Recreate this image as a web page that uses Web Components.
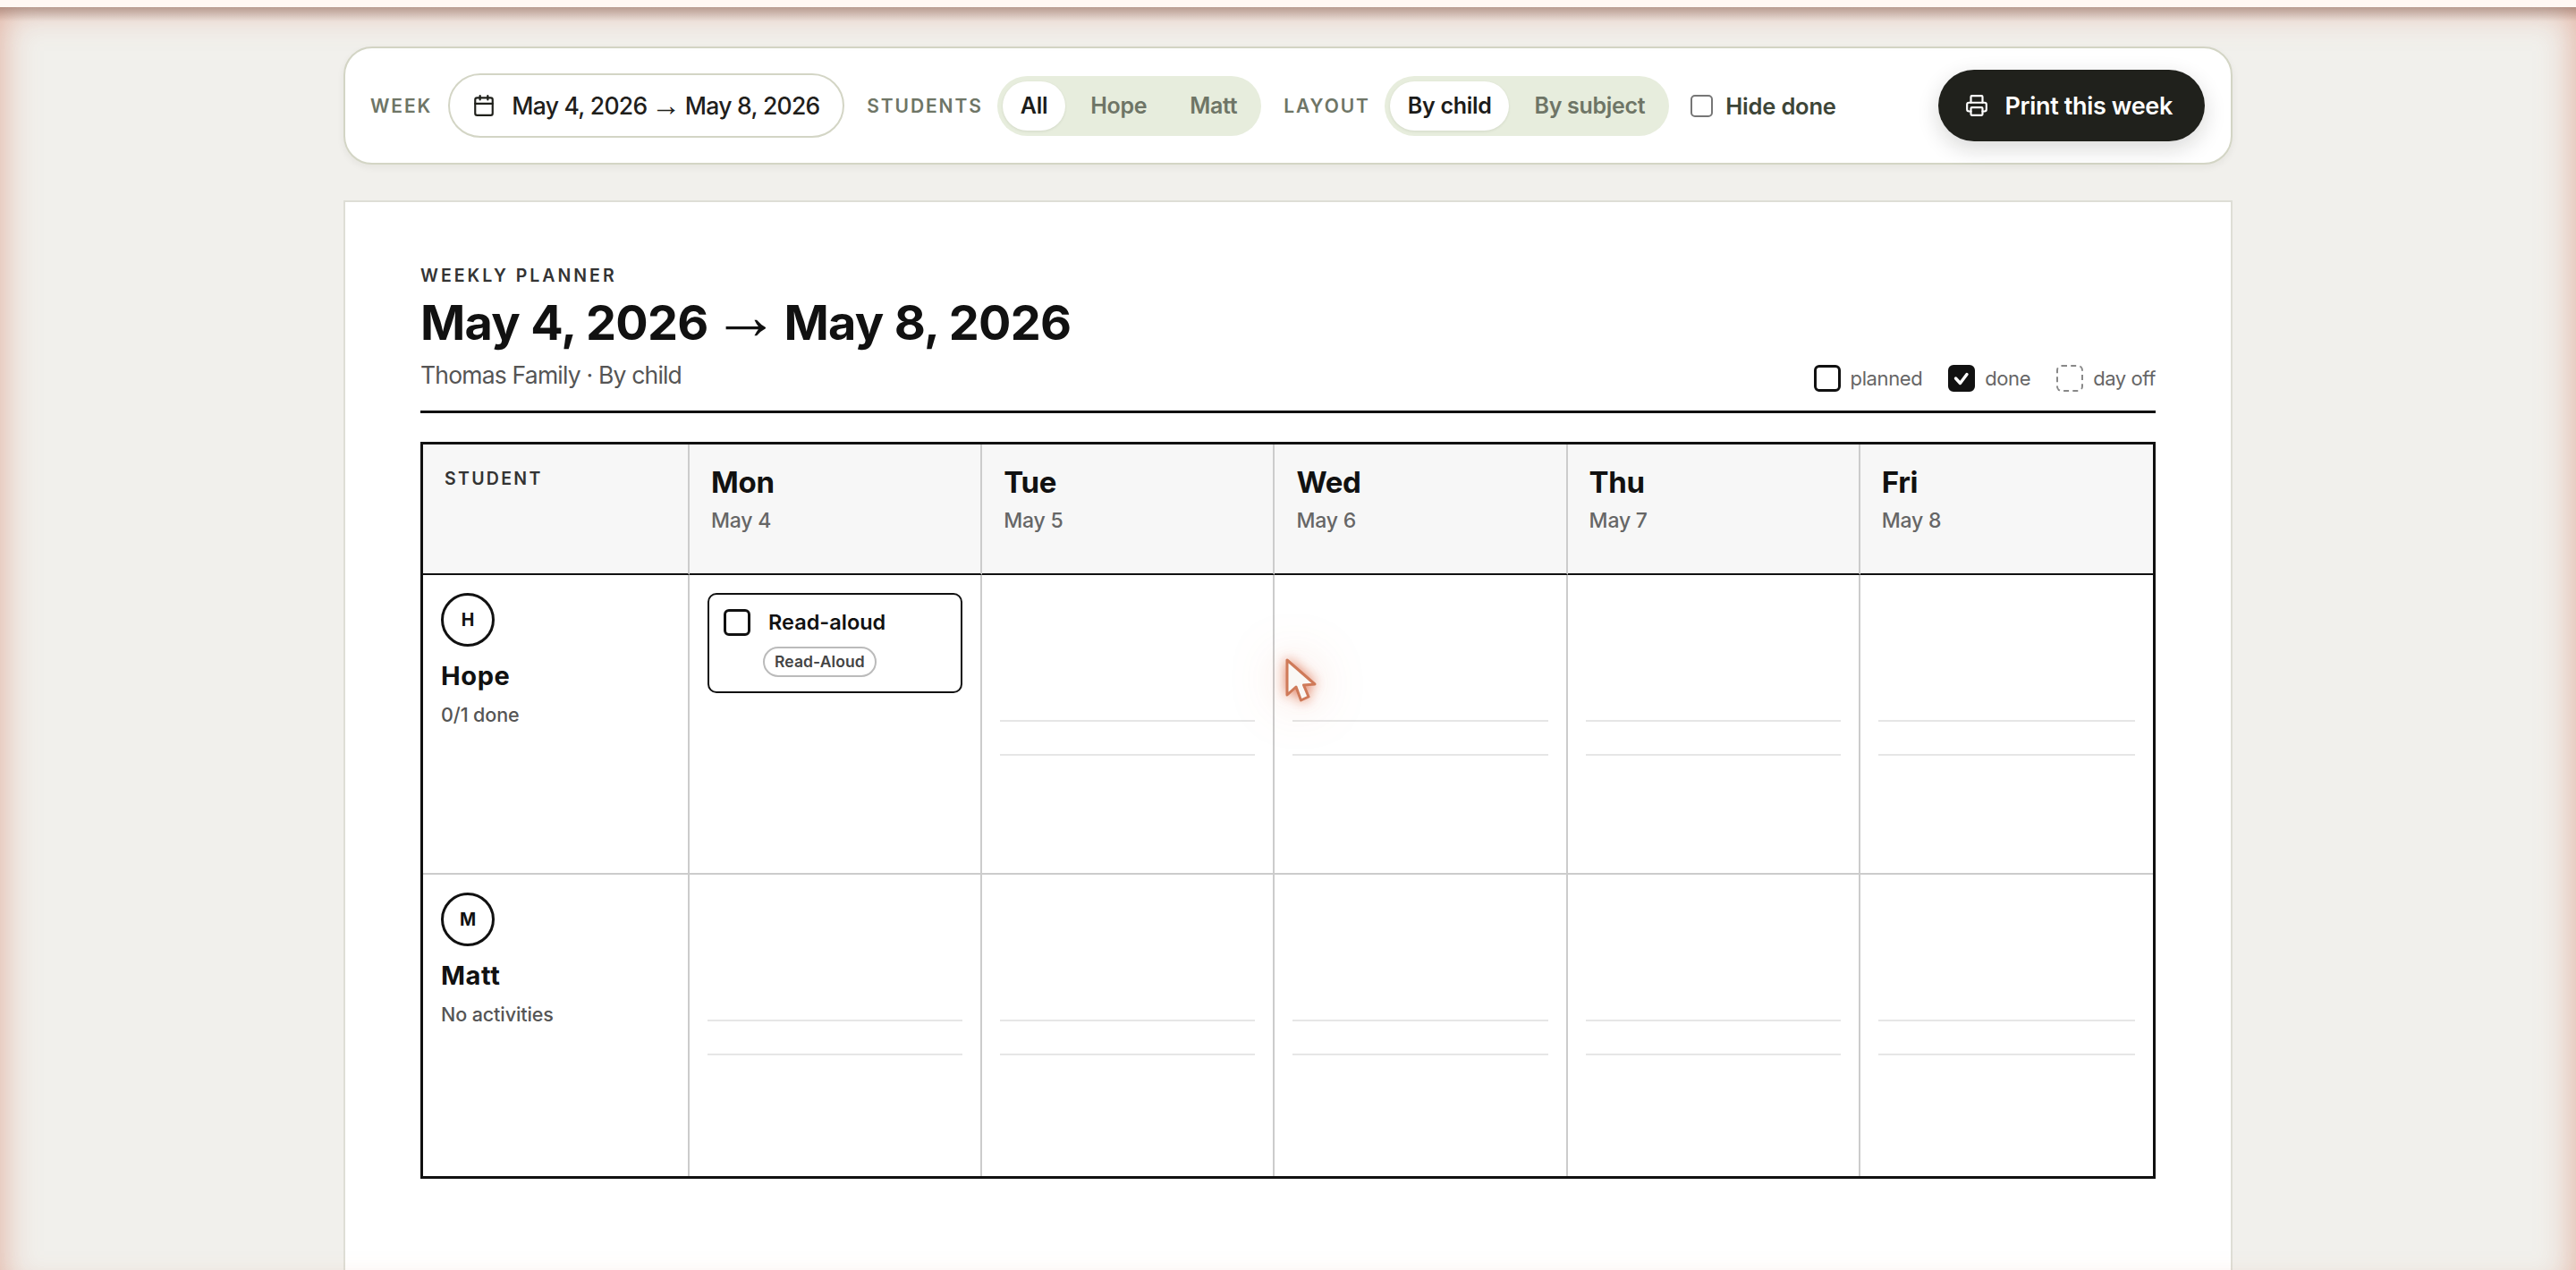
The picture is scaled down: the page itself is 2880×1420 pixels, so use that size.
<!DOCTYPE html>
<html>
<head>
<meta charset="utf-8">
<title>Weekly planner</title>
<style>
	html, body { margin: 0; height: 100%; overflow: hidden; }
	body {
		background: #f1f0ec;
		color: #111;
		font-family: Inter, "Liberation Sans", sans-serif;
	}
</style>
</head>
<body>
<planner-app>
	<planner-toolbar>
		<tool-label>WEEK</tool-label>
		<week-picker range="May 4, 2026 → May 8, 2026"></week-picker>
		<tool-label gap>STUDENTS</tool-label>
		<seg-control options="All,Hope,Matt" active="All"></seg-control>
		<tool-label gap>LAYOUT</tool-label>
		<seg-control options="By child,By subject" active="By child"></seg-control>
		<hide-toggle>Hide done</hide-toggle>
		<print-button>Print this week</print-button>
	</planner-toolbar>
	<planner-sheet eyebrow="WEEKLY PLANNER" heading="May 4, 2026 → May 8, 2026" sub="Thomas Family · By child">
		<plan-legend slot="legend"></plan-legend>
		<planner-grid>
			<head-cell><span class="student">STUDENT</span></head-cell>
			<head-cell day="Mon" date="May 4"></head-cell>
			<head-cell day="Tue" date="May 5"></head-cell>
			<head-cell day="Wed" date="May 6"></head-cell>
			<head-cell day="Thu" date="May 7"></head-cell>
			<head-cell day="Fri" date="May 8" last></head-cell>

			<student-cell name="Hope" note="0/1 done" ruled></student-cell>
			<day-cell ruled><task-card tag="Read-Aloud">Read-aloud</task-card></day-cell>
			<day-cell ruled empty></day-cell>
			<day-cell ruled empty></day-cell>
			<day-cell ruled empty></day-cell>
			<day-cell ruled empty last></day-cell>

			<student-cell name="Matt" note="No activities"></student-cell>
			<day-cell empty></day-cell>
			<day-cell empty></day-cell>
			<day-cell empty></day-cell>
			<day-cell empty></day-cell>
			<day-cell empty last></day-cell>
		</planner-grid>
	</planner-sheet>
</planner-app>
<cursor-glow></cursor-glow>
<edge-vignette></edge-vignette>

<script>
// the arrow comes from another font, spaces included so it doesn't overlap the dates
const thinArrow = text => text.replace(' → ', '<span class="ar"> → </span>');

class Base extends HTMLElement {
	constructor() {
		super();
		this.attachShadow({ mode: 'open' });
	}
}

class PlannerApp extends Base {
	connectedCallback() {
		this.shadowRoot.innerHTML = `
		<style>
			:host { display: block; border-top: 8px solid #fff8f4; padding-top: 44px; }
			.col { width: 2112px; margin: 0 auto; display: flex; flex-direction: column; gap: 40px; }
		</style>
		<div class="col"><slot></slot></div>`;
	}
}

class PlannerToolbar extends Base {
	connectedCallback() {
		this.shadowRoot.innerHTML = `
		<style>
			:host {
				display: flex;
				align-items: center;
				box-sizing: border-box;
				height: 132px;
				padding: 0 29px 0 28px;
				background: #fff;
				border: 2px solid #d3d5c5;
				border-radius: 32px;
				box-shadow: 0 3px 8px rgba(40,40,20,.06);
			}
		</style>
		<slot></slot>`;
	}
}

class ToolLabel extends Base {
	connectedCallback() {
		this.shadowRoot.innerHTML = `
		<style>
			:host {
				display: block;
				font-size: 21px;
				font-weight: 600;
				letter-spacing: 1.9px;
				color: #6e7566;
				margin-right: 16px;
			}
			:host([gap]) { margin-left: 25px; }
		</style>
		<slot></slot>`;
	}
}

class WeekPicker extends Base {
	connectedCallback() {
		this.shadowRoot.innerHTML = `
		<style>
			:host {
				display: flex;
				align-items: center;
				box-sizing: border-box;
				height: 72px;
				width: 443px;
				margin-left: 2px;
				padding-left: 25px;
				gap: 18px;
				border: 2px solid #d3d5c5;
				border-radius: 36px;
				font-size: 26.5px;
				font-weight: 500;
				letter-spacing: -0.7px;
				color: #1f201b;
				white-space: nowrap;
			}
			svg { width: 26px; height: 26px; flex: none; }
			.ar {
				font-family: "Liberation Sans", sans-serif;
				font-size: 33px;
				line-height: 0;
				font-weight: 400;
				letter-spacing: 0;
				word-spacing: -4.5px;
				vertical-align: -1px;
			}
		</style>
		<svg viewBox="0 0 24 24" fill="none" stroke="#1f201b" stroke-width="2" stroke-linecap="round" stroke-linejoin="round">
			<path d="M8 2v4"/><path d="M16 2v4"/><rect x="3" y="4" width="18" height="18" rx="2"/><path d="M3 10h18"/>
		</svg>
		<span>${thinArrow(this.getAttribute('range'))}</span>`;
	}
}

class SegControl extends Base {
	connectedCallback() {
		const active = this.getAttribute('active');
		const items = this.getAttribute('options').split(',').map(o =>
			`<span class="${o === active ? 'on' : ''}">${o}</span>`).join('');
		this.shadowRoot.innerHTML = `
		<style>
			:host {
				display: flex;
				gap: 8px;
				box-sizing: border-box;
				height: 67px;
				padding: 6px 7px 6px 6px;
				background: #e7eddd;
				border-radius: 34px;
				font-size: 25px;
				font-weight: 600;
				letter-spacing: -0.3px;
				color: #6e7566;
				white-space: nowrap;
			}
			span {
				display: flex;
				align-items: center;
				padding: 0 20px;
				border-radius: 28px;
			}
			.on { background: #fff; color: #1c1c1a; box-shadow: 0 1px 3px rgba(40,50,20,.1); }
		</style>
		${items}`;
	}
}

class HideToggle extends Base {
	connectedCallback() {
		this.shadowRoot.innerHTML = `
		<style>
			:host {
				display: flex;
				align-items: center;
				gap: 14px;
				margin-left: 24px;
				font-size: 25.5px;
				font-weight: 600;
				letter-spacing: -0.2px;
				color: #3d4538;
				white-space: nowrap;
			}
			input {
				appearance: none;
				box-sizing: border-box;
				width: 25px;
				height: 25px;
				margin: 0;
				background: #fff;
				border: 2px solid #767676;
				border-radius: 5px;
			}
		</style>
		<input type="checkbox"><slot></slot>`;
	}
}

class PrintButton extends Base {
	connectedCallback() {
		this.shadowRoot.innerHTML = `
		<style>
			:host {
				display: flex;
				align-items: center;
				gap: 19px;
				box-sizing: border-box;
				height: 80px;
				margin-left: auto;
				padding: 0 36px 0 30px;
				background: #20211c;
				border-radius: 40px;
				box-shadow: 0 8px 24px rgba(20,20,10,.16);
				color: #fff;
				font-size: 27px;
				font-weight: 600;
				letter-spacing: -0.35px;
				white-space: nowrap;
			}
			svg { width: 26px; height: 26px; flex: none; }
		</style>
		<svg viewBox="0 0 24 24" fill="none" stroke="#fff" stroke-width="2" stroke-linecap="round" stroke-linejoin="round">
			<path d="M6 18H4a2 2 0 0 1-2-2v-5a2 2 0 0 1 2-2h16a2 2 0 0 1 2 2v5a2 2 0 0 1-2 2h-2"/>
			<path d="M6 9V3a1 1 0 0 1 1-1h10a1 1 0 0 1 1 1v6"/>
			<rect x="6" y="14" width="12" height="8" rx="1"/>
		</svg>
		<slot></slot>`;
	}
}

class PlannerSheet extends Base {
	connectedCallback() {
		this.shadowRoot.innerHTML = `
		<style>
			:host {
				display: block;
				box-sizing: border-box;
				height: 1196px;
				padding: 70px 84px 0;
				background: #fff;
				border: 2px solid #deded6;
				border-bottom: 0;
			}
			header {
				display: flex;
				justify-content: space-between;
				align-items: flex-end;
				padding-bottom: 21px;
				border-bottom: 3px solid #111;
				margin-bottom: 32px;
			}
			.eyebrow { font-size: 19.5px; line-height: 24px; font-weight: 600; letter-spacing: 3px; color: #333; margin-bottom: 9px; }
			h1 { margin: 0; font-size: 54px; line-height: 64px; font-weight: 700; letter-spacing: -0.7px; color: #111; }
			h1 .ar {
				font-family: "Liberation Sans", sans-serif;
				font-size: 75px;
				line-height: 0;
				letter-spacing: 0;
				word-spacing: -16px;
				vertical-align: 1px;
			}
			.sub { font-size: 26.5px; line-height: 34px; font-weight: 400; letter-spacing: -0.8px; color: #555; margin-top: 9px; margin-bottom: 2px; }
		</style>
		<header>
			<div>
				<div class="eyebrow">${this.getAttribute('eyebrow')}</div>
				<h1>${thinArrow(this.getAttribute('heading'))}</h1>
				<div class="sub">${this.getAttribute('sub')}</div>
			</div>
			<slot name="legend"></slot>
		</header>
		<slot></slot>`;
	}
}

class PlanLegend extends Base {
	connectedCallback() {
		this.shadowRoot.innerHTML = `
		<style>
			:host {
				display: flex;
				align-items: center;
				gap: 29px;
				font-size: 22px;
				color: #666;
				letter-spacing: -0.4px;
			}
			div { display: flex; align-items: center; gap: 11px; }
			i {
				display: block;
				box-sizing: border-box;
				width: 30px;
				height: 30px;
				border: 3px solid #111;
				border-radius: 6px;
			}
			i.done { background: #111; }
			i.off { border: 2px dashed #888; }
			svg { display: block; width: 24px; height: 24px; }
		</style>
		<div><i></i>planned</div>
		<div><i class="done"><svg viewBox="0 0 24 24" fill="none" stroke="#fff" stroke-width="3.4" stroke-linecap="round" stroke-linejoin="round"><path d="M5.5 12l5 5.5 7.5-10"/></svg></i>done</div>
		<div><i class="off"></i>day off</div>`;
	}
}

class PlannerGrid extends Base {
	connectedCallback() {
		this.shadowRoot.innerHTML = `
		<style>
			:host { display: block; border: 3px solid #111; }
			.grid {
				display: grid;
				grid-template-columns: 298px repeat(5, 1fr);
				grid-template-rows: 146px 335px 337px;
			}
		</style>
		<div class="grid"><slot></slot></div>`;
	}
}

class HeadCell extends Base {
	connectedCallback() {
		const day = this.getAttribute('day');
		this.shadowRoot.innerHTML = `
		<style>
			:host {
				display: block;
				box-sizing: border-box;
				padding: 22px 24px 0;
				background: #f7f7f7;
				border-right: 2px solid #ccc;
				border-bottom: 2px solid #111;
			}
			:host([last]) { border-right: 0; }
			.day { font-size: 33px; line-height: 40px; font-weight: 700; letter-spacing: -0.3px; color: #111; }
			.date { font-size: 23px; line-height: 30px; font-weight: 500; letter-spacing: -0.2px; color: #666; margin-top: 8px; }
			::slotted(.student) {
				display: block;
				font-size: 19.5px;
				line-height: 24px;
				font-weight: 600;
				letter-spacing: 2.3px;
				color: #333;
				margin-top: 4px;
			}
		</style>
		${day ? `<div class="day">${day}</div><div class="date">${this.getAttribute('date')}</div>` : '<slot></slot>'}`;
	}
}

class StudentCell extends Base {
	connectedCallback() {
		const name = this.getAttribute('name');
		this.shadowRoot.innerHTML = `
		<style>
			:host {
				display: block;
				box-sizing: border-box;
				padding: 20px;
				border-right: 2px solid #ccc;
			}
			:host([ruled]) { border-bottom: 2px solid #ccc; }
			.avatar {
				box-sizing: border-box;
				display: flex;
				align-items: center;
				justify-content: center;
				width: 60px;
				height: 60px;
				border: 3px solid #111;
				border-radius: 50%;
				font-size: 19.5px;
				font-weight: 700;
				color: #111;
			}
			.name { font-size: 29px; line-height: 36px; font-weight: 700; letter-spacing: 0.6px; color: #111; margin-top: 15px; }
			.note { font-size: 21.5px; line-height: 28px; font-weight: 500; letter-spacing: -0.1px; color: #555; margin-top: 11px; }
		</style>
		<div class="avatar">${name[0]}</div>
		<div class="name">${name}</div>
		<div class="note">${this.getAttribute('note')}</div>`;
	}
}

class DayCell extends Base {
	connectedCallback() {
		this.shadowRoot.innerHTML = `
		<style>
			:host {
				display: block;
				box-sizing: border-box;
				padding: 20px;
				border-right: 2px solid #ccc;
			}
			:host([ruled]) { border-bottom: 2px solid #ccc; }
			:host([last]) { border-right: 0; }
			.lines { display: grid; gap: 36px; padding-top: 142px; }
			.lines b { display: block; height: 2px; background: #e6e6e6; }
		</style>
		${this.hasAttribute('empty') ? '<div class="lines"><b></b><b></b></div>' : '<slot></slot>'}`;
	}
}

class TaskCard extends Base {
	connectedCallback() {
		this.shadowRoot.innerHTML = `
		<style>
			:host {
				display: block;
				box-sizing: border-box;
				height: 112px;
				padding: 16px 16px 0;
				border: 2.5px solid #111;
				border-radius: 10px;
			}
			.top { display: flex; align-items: center; gap: 20px; }
			i {
				display: block;
				box-sizing: border-box;
				width: 30px;
				height: 30px;
				border: 3px solid #111;
				border-radius: 6px;
			}
			.title { font-size: 23.5px; line-height: 28px; font-weight: 600; color: #111; }
			.tag {
				display: inline-block;
				box-sizing: border-box;
				height: 34px;
				line-height: 30px;
				margin: 12px 0 0 44px;
				padding: 0 11px;
				border: 2px solid #bbb;
				border-radius: 17px;
				font-size: 17.5px;
				font-weight: 600;
				letter-spacing: 0.1px;
				color: #444;
			}
		</style>
		<div class="top"><i></i><span class="title"><slot></slot></span></div>
		<span class="tag">${this.getAttribute('tag')}</span>`;
	}
}

class CursorGlow extends Base {
	connectedCallback() {
		this.shadowRoot.innerHTML = `
		<style>
			:host { position: fixed; left: 1436px; top: 735px; width: 38px; height: 52px; pointer-events: none; }
			svg { display: block; overflow: visible; filter: drop-shadow(0 0 7px rgba(215,90,50,.75)) drop-shadow(0 0 28px rgba(215,90,50,.28)); }
		</style>
		<svg width="38" height="52" viewBox="0 0 38 52">
			<path d="M3 3L3 42L13 33L18.5 48L27 44L21.5 31L34 30Z" fill="#faf8f5" stroke="#cf7a59" stroke-width="3" stroke-linejoin="round"/>
		</svg>`;
	}
}

class EdgeVignette extends Base {
	connectedCallback() {
		this.shadowRoot.innerHTML = `
		<style>
			:host {
				position: fixed;
				left: 0;
				right: 0;
				top: 8px;
				bottom: 0;
				overflow: hidden;
				pointer-events: none;
			}
			.glow {
				position: absolute;
				left: 0;
				right: 0;
				top: 0;
				bottom: -28px;
				box-shadow: inset 0 0 40px rgba(210,115,85,.56);
			}
			.top {
				position: absolute;
				left: 0;
				right: 0;
				top: 0;
				height: 16px;
				background: linear-gradient(rgba(70,40,30,.3), rgba(70,40,30,0));
			}
		</style>
		<div class="glow"></div><div class="top"></div>`;
	}
}

customElements.define('planner-app', PlannerApp);
customElements.define('planner-toolbar', PlannerToolbar);
customElements.define('tool-label', ToolLabel);
customElements.define('week-picker', WeekPicker);
customElements.define('seg-control', SegControl);
customElements.define('hide-toggle', HideToggle);
customElements.define('print-button', PrintButton);
customElements.define('planner-sheet', PlannerSheet);
customElements.define('plan-legend', PlanLegend);
customElements.define('planner-grid', PlannerGrid);
customElements.define('head-cell', HeadCell);
customElements.define('student-cell', StudentCell);
customElements.define('day-cell', DayCell);
customElements.define('task-card', TaskCard);
customElements.define('cursor-glow', CursorGlow);
customElements.define('edge-vignette', EdgeVignette);
</script>
</body>
</html>
